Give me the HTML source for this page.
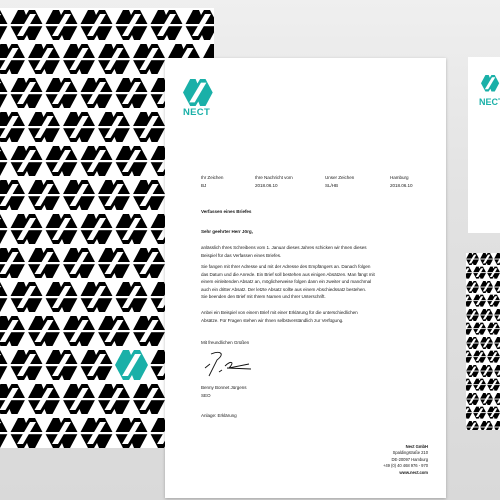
<!DOCTYPE html>
<html><head><meta charset="utf-8"><style>
*{margin:0;padding:0;box-sizing:border-box}
body{width:500px;height:500px;overflow:hidden;background:linear-gradient(180deg,#efefef 0%,#e2e2e2 40%,#d9d9d9 100%);position:relative;font-family:"Liberation Sans",sans-serif}
.abs{position:absolute}
.letter{left:165px;top:58px;width:281px;height:440px;background:#fff;box-shadow:0 1px 3px rgba(0,0,0,.25)}
.t{position:absolute;font-size:4.6px;line-height:7.6px;color:#222;white-space:nowrap;font-family:"Liberation Sans",sans-serif;letter-spacing:-0.05px}
.b{font-weight:bold}
</style></head><body>
<svg class="abs" style="left:0;top:0" width="500" height="500">
<defs>
<g id="hx">
<polygon points="0,15 8,0 25,0 33,15 25,30 8,30"/>
<polygon points="7,26 20,4 26,4 13,26" fill="#fff"/>
<polygon points="14,0 19,0 16,5" fill="#fff"/>
<polygon points="14,30 19,30 17,25" fill="#fff"/>
</g>
<g id="hp">
<polygon points="0,15 8,0 25,0 33,15 25,30 8,30"/>
<polygon points="7,26 20,4 26,4 13,26" fill="#fff"/>
<rect x="0" y="14" width="33" height="2.2" fill="#fff"/>
<polygon points="14,0 19,0 16,5" fill="#fff"/>
<polygon points="14,30 19,30 17,25" fill="#fff"/>
</g>
<pattern id="p" width="35" height="68" patternUnits="userSpaceOnUse" x="115" y="350">
<rect width="35" height="68" fill="#fff"/>
<g fill="#000"><use href="#hp"/><use href="#hp" x="-17.5" y="34"/><use href="#hp" x="17.5" y="34"/></g>
</pattern>
<pattern id="p2" width="14" height="28" patternUnits="userSpaceOnUse" x="466" y="253">
<rect width="14" height="28" fill="#fff"/>
<g fill="#000" transform="scale(0.4)"><use href="#hp"/><use href="#hp" x="-17.5" y="34"/><use href="#hp" x="17.5" y="34"/></g>
</pattern>
</defs>
<rect x="0" y="8" width="214" height="440" fill="url(#p)" />
<rect x="113" y="348" width="37" height="34" fill="#fff"/>
<use href="#hx" x="115" y="350" fill="#1ab0a8"/>
<rect x="466" y="253" width="34" height="177" fill="url(#p2)"/>
<rect x="468" y="57" width="32" height="176" fill="#fff"/>
<g transform="translate(481,75) scale(0.55)" fill="#1ab0a8"><use href="#hx"/></g>
<text x="479" y="105" font-family="Liberation Sans" font-weight="bold" font-size="9" fill="#1ab0a8">NECT</text>
</svg>
<div class="abs letter">
<svg class="abs" style="left:18px;top:21px" width="30" height="28"><g fill="#1ab0a8" transform="scale(0.9)"><use href="#hx"/></g></svg>
<div class="t b" style="left:18px;top:50px;font-size:9.5px;line-height:10px;color:#1ab0a8;letter-spacing:0.3px">NECT</div>
<div class="t" style="left:36px;top:116px">Ihr Zeichen<br>BJ</div>
<div class="t" style="left:90px;top:116px">Ihre Nachricht vom<br>2018.06.10</div>
<div class="t" style="left:160px;top:116px">Unser Zeichen<br>SL/HB</div>
<div class="t" style="left:225px;top:116px">Hamburg<br>2018.06.10</div>
<div class="t b" style="left:36px;top:150px">Verfassen eines Briefes</div>
<div class="t b" style="left:36px;top:170px">Sehr geehrter Herr Jörg,</div>
<div class="t" style="left:36px;top:186px">anlässlich Ihres Schreibens vom 1. Januar dieses Jahres schicken wir Ihnen dieses<br>Beispiel für das Verfassen eines Briefes.</div>
<div class="t" style="left:36px;top:205px">Sie fangen mit Ihrer Adresse und mit der Adresse des Empfängers an. Danach folgen<br>das Datum und die Anrede. Ein Brief soll bestehen aus einigen Absätzen. Man fängt mit<br>einem einleitenden Absatz an, möglicherweise folgen dann ein zweiter und manchmal<br>auch ein dritter Absatz. Der letzte Absatz sollte aus einem Abschiedssatz bestehen.<br>Sie beenden den Brief mit Ihrem Namen und Ihrer Unterschrift.</div>
<div class="t" style="left:36px;top:251px">Anbei ein Beispiel von einem Brief mit einer Erklärung für die unterschiedlichen<br>Absätze. Für Fragen stehen wir Ihnen selbstverständlich zur Verfügung.</div>
<div class="t" style="left:36px;top:281px">Mit freundlichen Grüßen</div>
<svg class="abs" style="left:36px;top:292px" width="60" height="30"><path d="M10 4 C20 0 24 4 16 10 L8 26 M4 18 L9 14 M18 22 L21 20 M24 16 C30 10 34 12 28 18 L48 14 M26 18 L50 19" fill="none" stroke="#111" stroke-width="0.9"/></svg>
<div class="t" style="left:36px;top:326px">Benny Bonnet Jürgens<br>SEO</div>
<div class="t" style="left:36px;top:354px">Anlage: Erklärung</div>
<div class="t" style="right:18px;top:386px;text-align:right;line-height:6.4px;font-size:4.2px"><b>Nect GmbH</b><br>Spaldingstraße 210<br>DE-20097 Hamburg<br>+49 (0) 40 468 976 - 970<br><b>www.nect.com</b></div>
</div>
</body></html>
